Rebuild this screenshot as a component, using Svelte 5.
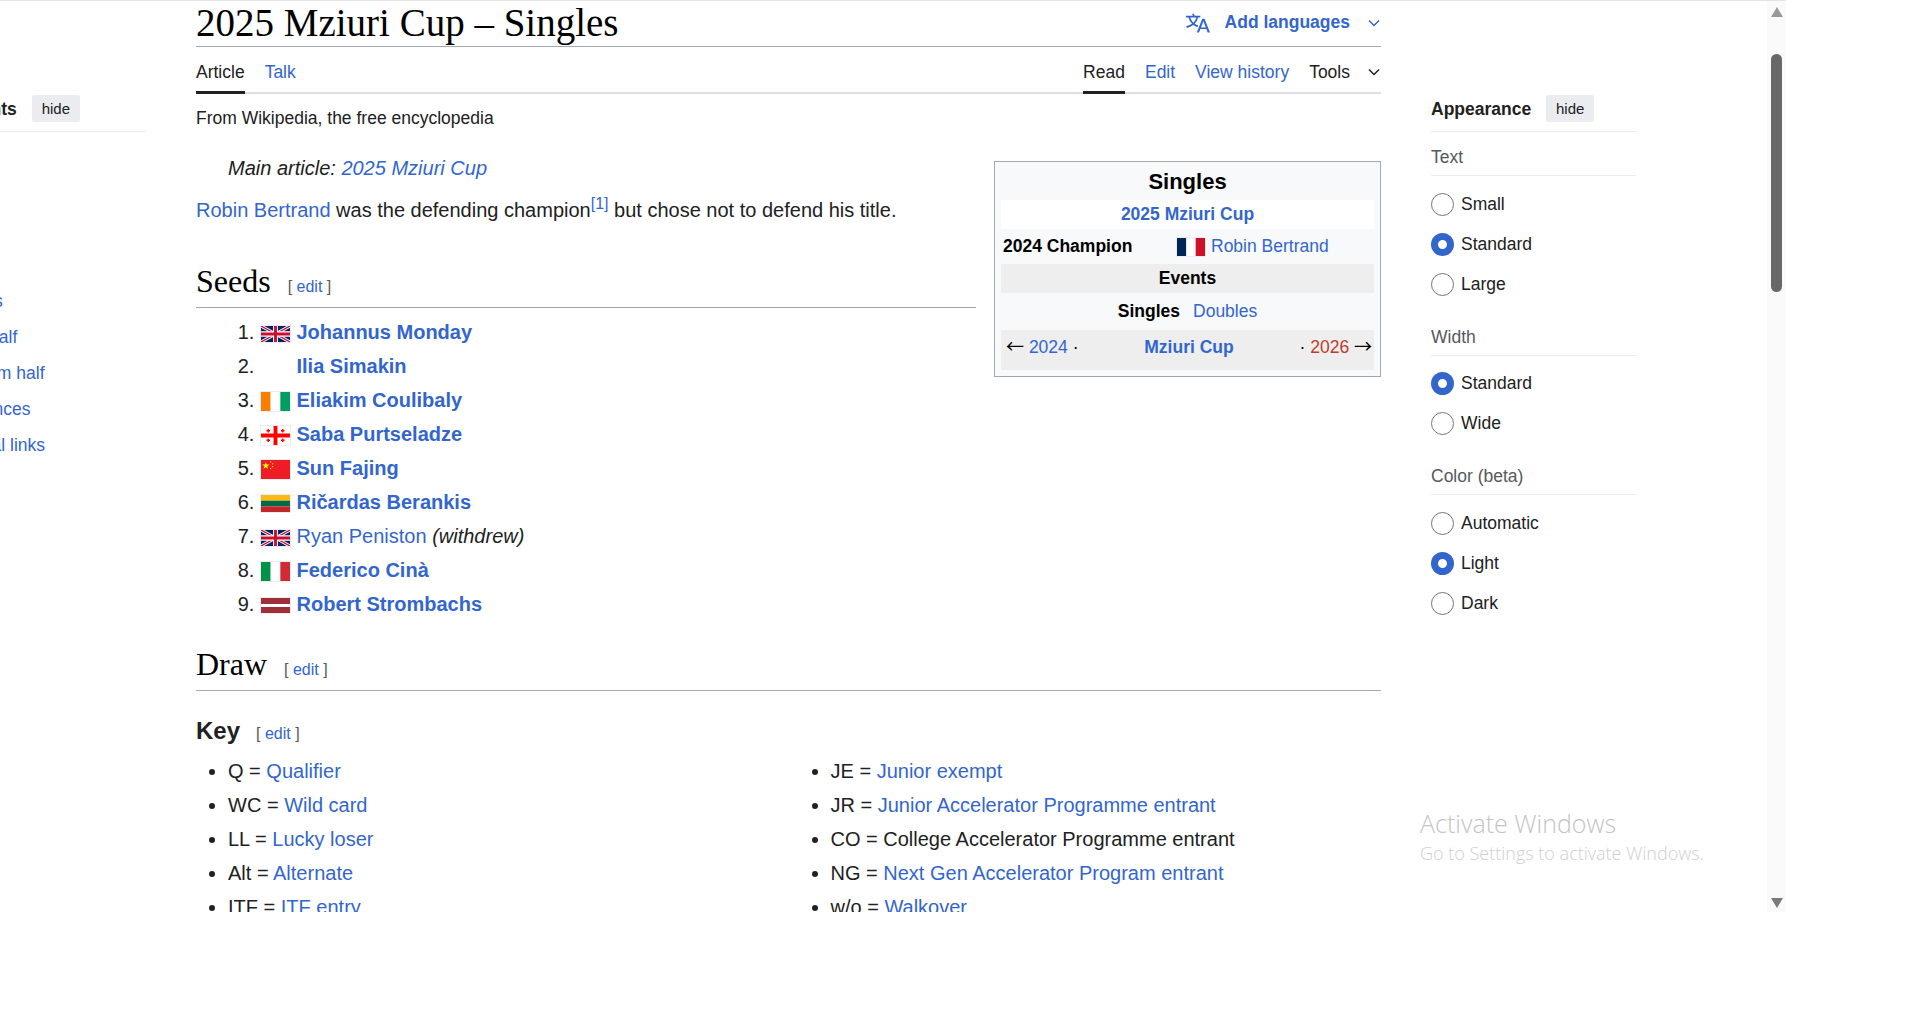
<script>
  const toc = [
    { title: "(Top)" },
    { title: "Seeds" },
    { title: "Draw" },
    { title: "Key", sub: true },
    { title: "Finals", sub: true },
    { title: "Top half", sub: true },
    { title: "Bottom half", sub: true },
    { title: "References" },
    { title: "External links" },
  ];

  const seeds = [
    { flag: "gb", name: "Johannus Monday", bold: true },
    { flag: "", name: "Ilia Simakin", bold: true },
    { flag: "ci", name: "Eliakim Coulibaly", bold: true },
    { flag: "ge", name: "Saba Purtseladze", bold: true },
    { flag: "cn", name: "Sun Fajing", bold: true },
    { flag: "lt", name: "Ričardas Berankis", bold: true },
    { flag: "gb", name: "Ryan Peniston", note: "(withdrew)" },
    { flag: "it", name: "Federico Cinà", bold: true },
    { flag: "lv", name: "Robert Strombachs", bold: true },
  ];

  const keyLeft = [
    ["Q", "Qualifier"],
    ["WC", "Wild card"],
    ["LL", "Lucky loser"],
    ["Alt", "Alternate"],
    ["ITF", "ITF entry"],
  ];

  const keyRight = [
    ["JE", "Junior exempt"],
    ["JR", "Junior Accelerator Programme entrant"],
    ["CO", "College Accelerator Programme entrant", true],
    ["NG", "Next Gen Accelerator Program entrant"],
    ["w/o", "Walkover"],
  ];

  const appearance = [
    { label: "Text", name: "text", options: ["Small", "Standard", "Large"], value: "Standard" },
    { label: "Width", name: "width", options: ["Standard", "Wide"], value: "Standard" },
    { label: "Color (beta)", name: "color", options: ["Automatic", "Light", "Dark"], value: "Light" },
  ];
</script>

{#snippet flag(code)}
  {#if code === "gb"}
    <svg class="flag" viewBox="0 0 60 30" width="31" height="18" preserveAspectRatio="none">
      <rect width="60" height="30" fill="#012169" />
      <path d="M0 0L60 30M60 0L0 30" stroke="#fff" stroke-width="6" />
      <path d="M0 0L60 30M60 0L0 30" stroke="#c8102e" stroke-width="2.5" />
      <path d="M30 0V30M0 15H60" stroke="#fff" stroke-width="10" />
      <path d="M30 0V30M0 15H60" stroke="#c8102e" stroke-width="6" />
    </svg>
  {:else if code === "ci"}
    <svg class="flag" viewBox="0 0 3 2" width="31" height="21" preserveAspectRatio="none">
      <rect width="1" height="2" fill="#f77f00" />
      <rect x="1" width="1" height="2" fill="#fff" />
      <rect x="2" width="1" height="2" fill="#009e60" />
    </svg>
  {:else if code === "ge"}
    <svg class="flag" viewBox="0 0 30 20" width="31" height="21" preserveAspectRatio="none">
      <rect width="30" height="20" fill="#fff" />
      <path d="M15 0V20M0 10H30" stroke="#f00" stroke-width="4" />
      <path d="M7.5 3.2V6.8M5.7 5H9.3M22.5 3.2V6.8M20.7 5H24.3M7.5 13.2V16.8M5.7 15H9.3M22.5 13.2V16.8M20.7 15H24.3" stroke="#f00" stroke-width="1.4" />
    </svg>
  {:else if code === "cn"}
    <svg class="flag" viewBox="0 0 30 20" width="31" height="21" preserveAspectRatio="none">
      <rect width="30" height="20" fill="#ee1c25" />
      <polygon points="5,2 5.9,4.8 8.8,4.8 6.5,6.5 7.4,9.2 5,7.6 2.6,9.2 3.5,6.5 1.2,4.8 4.1,4.8" fill="#ff0" />
      <circle cx="10" cy="2" r="0.7" fill="#ff0" />
      <circle cx="12" cy="4" r="0.7" fill="#ff0" />
      <circle cx="12" cy="7" r="0.7" fill="#ff0" />
      <circle cx="10" cy="9" r="0.7" fill="#ff0" />
    </svg>
  {:else if code === "lt"}
    <svg class="flag" viewBox="0 0 3 3" width="31" height="19" preserveAspectRatio="none">
      <rect width="3" height="1" fill="#fdb913" />
      <rect y="1" width="3" height="1" fill="#006a44" />
      <rect y="2" width="3" height="1" fill="#c1272d" />
    </svg>
  {:else if code === "it"}
    <svg class="flag" viewBox="0 0 3 2" width="31" height="21" preserveAspectRatio="none">
      <rect width="1" height="2" fill="#009246" />
      <rect x="1" width="1" height="2" fill="#fff" />
      <rect x="2" width="1" height="2" fill="#ce2b37" />
    </svg>
  {:else if code === "lv"}
    <svg class="flag" viewBox="0 0 30 15" width="31" height="17" preserveAspectRatio="none">
      <rect width="30" height="15" fill="#9e3039" />
      <rect y="6" width="30" height="3" fill="#fff" />
    </svg>
  {:else if code === "fr"}
    <svg class="flag" viewBox="0 0 3 2" width="30" height="20" preserveAspectRatio="none">
      <rect width="1" height="2" fill="#002654" />
      <rect x="1" width="1" height="2" fill="#fff" />
      <rect x="2" width="1" height="2" fill="#ce1126" />
    </svg>
  {/if}
{/snippet}

{#snippet chevron()}
  <svg class="chevron" viewBox="0 0 12 8" width="12" height="8">
    <path d="M1 1.5L6 6.5L11 1.5" fill="none" stroke="currentColor" stroke-width="1.5" />
  </svg>
{/snippet}

{#snippet edit()}
  <span class="editsection">[ <a href="#edit">edit</a> ]</span>
{/snippet}

<div class="page">
  <aside class="toc">
    <div class="panel-head">
      <strong>Contents</strong>
      <button>hide</button>
    </div>
    <ul>
      {#each toc as item}
        <li class:sub={item.sub}><a href="#toc">{item.title}</a></li>
      {/each}
    </ul>
  </aside>

  <main>
    <header class="title-row">
      <h1>2025 Mziuri Cup – Singles</h1>
      <a class="languages" href="#lang">
        <svg viewBox="0 0 20 20" width="24" height="24" fill="currentColor">
          <path d="M20 18h-1.44a.6.6 0 0 1-.4-.12.8.8 0 0 1-.23-.31L17 15h-5l-1 2.54a.8.8 0 0 1-.22.3.6.6 0 0 1-.4.14H9l4.55-11.47h1.89zm-3.53-4.31L14.89 9.5a12 12 0 0 1-.39-1.24q-.09.37-.19.69l-.19.56-1.58 4.19zm-6.3-1.58a13.4 13.4 0 0 1-2.91-1.41 11.46 11.46 0 0 0 2.81-5.37H12V4H7.31a4 4 0 0 0-.2-.56C6.87 2.79 6.6 2 6.6 2l-1.47.5s.4.89.6 1.5H0v1.33h2.15A11.23 11.23 0 0 0 5 10.7a17.2 17.2 0 0 1-5 2.1q.56.82.87 1.38a23.3 23.3 0 0 0 5.22-2.51 15.6 15.6 0 0 0 3.56 1.77zM3.63 5.33h4.91a8.1 8.1 0 0 1-2.45 4.45 9.1 9.1 0 0 1-2.46-4.45" />
        </svg>
        <b>Add languages</b>
        {@render chevron()}
      </a>
    </header>

    <nav class="tabs">
      <div class="tab-group">
        <span class="tab active">Article</span>
        <a class="tab" href="#talk">Talk</a>
      </div>
      <div class="tab-group">
        <span class="tab active">Read</span>
        <a class="tab" href="#edit">Edit</a>
        <a class="tab" href="#history">View history</a>
        <span class="tab tools">Tools {@render chevron()}</span>
      </div>
    </nav>

    <p class="tagline">From Wikipedia, the free encyclopedia</p>

    <div class="article">
      <table class="infobox">
        <tbody>
          <tr><th colspan="2" class="ib-title">Singles</th></tr>
          <tr><td colspan="2" class="ib-event"><a href="#cup">2025 Mziuri Cup</a></td></tr>
          <tr class="ib-champ">
            <th>2024 Champion</th>
            <td>{@render flag("fr")}<a href="#robin">Robin Bertrand</a></td>
          </tr>
          <tr><th colspan="2" class="ib-band">Events</th></tr>
          <tr>
            <td colspan="2" class="ib-events"><b>Singles</b><a href="#doubles">Doubles</a></td>
          </tr>
          <tr>
            <td colspan="2" class="ib-nav">
              <div class="ib-nav-row">
                <span><span class="nav-arrow">←</span> <a href="#2024">2024</a> ·</span>
                <a class="strong" href="#cup">Mziuri Cup</a>
                <span class="right">· <a class="new" href="#2026">2026</a> <span class="nav-arrow">→</span></span>
              </div>
            </td>
          </tr>
        </tbody>
      </table>

      <p class="hatnote">Main article: <a href="#cup">2025 Mziuri Cup</a></p>
      <p class="lead">
        <a href="#robin">Robin Bertrand</a> was the defending champion<sup><a href="#ref">[1]</a></sup> but chose not to defend his title.
      </p>

      <h2>Seeds{@render edit()}</h2>
      <ol class="seeds">
        {#each seeds as seed}
          <li>
            <span class="flag-slot">{@render flag(seed.flag)}</span>{#if seed.bold}<a class="strong" href="#player">{seed.name}</a>{:else}<a href="#player">{seed.name}</a> <i>{seed.note}</i>{/if}
          </li>
        {/each}
      </ol>

      <h2 class="draw">Draw{@render edit()}</h2>
      <h3>Key{@render edit()}</h3>
      <div class="key">
        <ul>
          {#each keyLeft as [abbr, text]}
            <li>{abbr} = <a href="#key">{text}</a></li>
          {/each}
        </ul>
        <ul>
          {#each keyRight as [abbr, text, plain]}
            <li>{abbr} = {#if plain}{text}{:else}<a href="#key">{text}</a>{/if}</li>
          {/each}
        </ul>
      </div>
    </div>
  </main>

  <aside class="appearance">
    <div class="panel-head">
      <strong>Appearance</strong>
      <button>hide</button>
    </div>
    {#each appearance as group}
      <section>
        <div class="group-label">{group.label}</div>
        {#each group.options as option}
          <label class="radio">
            <input type="radio" name={group.name} value={option} checked={option === group.value} />
            {option}
          </label>
        {/each}
      </section>
    {/each}
  </aside>

  <div class="scrollbar">
    <span class="arrow up"></span>
    <span class="thumb"></span>
    <span class="arrow down"></span>
  </div>
</div>

<div class="activate">
  <div class="activate-big">Activate Windows</div>
  <div class="activate-small">Go to Settings to activate Windows.</div>
</div>

<style>
  :global(body) {
    background: #fff;
    color: #202122;
    font-family: "Liberation Sans", Arial, sans-serif;
  }

  a {
    color: #36c;
    text-decoration: none;
  }

  a.new {
    color: #bf3c2c;
  }

  .page {
    display: flex;
    width: 1786px;
    height: 912px;
    overflow: hidden;
    border-top: 1px solid #e4e4e4;
    box-sizing: border-box;
    position: relative;
  }

  /* sidebars */
  .toc {
    flex: 0 0 205px;
    margin-left: -59px;
    margin-right: 50px;
    font-size: 17.5px;
  }

  .appearance {
    flex: 0 0 205px;
    margin-left: 50px;
    font-size: 17.5px;
  }

  .panel-head {
    display: flex;
    align-items: center;
    gap: 15px;
    height: 27px;
    margin-top: 94px;
    padding-bottom: 9px;
    border-bottom: 1px solid #eaecf0;
  }

  .panel-head strong {
    margin-top: 2px;
    font-size: 17.5px;
  }

  button {
    width: 48px;
    height: 27px;
    padding: 0;
    border: none;
    border-radius: 2px;
    background: #eaecf0;
    color: #202122;
    font: 15px "Liberation Sans", Arial, sans-serif;
  }

  .toc ul {
    list-style: none;
    margin: 7px 0 0;
    padding: 0;
  }

  .toc li {
    height: 36px;
    line-height: 36px;
    white-space: nowrap;
  }

  .toc li.sub {
    padding-left: 15px;
  }

  .group-label {
    height: 33px;
    line-height: 30px;
    padding-top: 10px;
    margin-bottom: 8px;
    color: #54595d;
    border-bottom: 1px solid #eaecf0;
  }

  .appearance section + section {
    margin-top: 7.5px;
  }

  .radio {
    display: flex;
    align-items: center;
    gap: 7px;
    height: 40px;
  }

  .radio input {
    appearance: none;
    box-sizing: border-box;
    width: 23px;
    height: 23px;
    margin: 0;
    border: 1px solid #72777d;
    border-radius: 50%;
    background: #fff;
  }

  .radio input:checked {
    border: 7px solid #36c;
  }

  /* main column */
  main {
    flex: 0 0 1185px;
  }

  .title-row {
    display: flex;
    justify-content: space-between;
    align-items: center;
    height: 45px;
    border-bottom: 1px solid #a2a9b1;
  }

  h1 {
    margin: 0 0 2px;
    font: 400 39px/43px "Liberation Serif", Georgia, serif;
    color: #000;
  }

  .languages {
    display: flex;
    align-items: center;
    margin: 0 1px 2px 0;
    font-size: 17.5px;
  }

  .languages b {
    margin: 0 18px 0 15px;
  }

  .tabs {
    display: flex;
    justify-content: space-between;
    height: 47px;
    box-sizing: border-box;
    border-bottom: 2px solid #dcdfe3;
    font-size: 17.5px;
  }

  .tab-group {
    display: flex;
    gap: 20px;
    margin-right: 1px;
  }

  .tab {
    height: 47px;
    box-sizing: border-box;
    line-height: 51px;
  }

  .tab.active {
    border-bottom: 3px solid #202122;
  }

  .tools {
    display: flex;
    align-items: center;
    gap: 18px;
    padding-top: 3px;
    line-height: 48px;
  }

  .tagline {
    margin: 12px 0 0;
    font-size: 17.5px;
    line-height: 24px;
  }

  .article {
    padding-top: 22px;
    font-size: 20px;
    line-height: 32px;
  }

  .hatnote {
    margin: 0 0 10px;
    padding-left: 32px;
    font-style: italic;
  }

  .lead {
    margin: 0;
  }

  sup {
    font-size: 16px;
    line-height: 1;
  }

  .infobox {
    float: right;
    box-sizing: border-box;
    width: 387px;
    margin: 9px 0 8px 18px;
    padding: 0 6px 6px;
    border: 1px solid #a2a9b1;
    border-spacing: 0;
    background: #f8f9fa;
    color: #000;
    font-size: 17.5px;
    line-height: 24px;
    text-align: center;
  }

  .infobox th,
  .infobox td {
    box-sizing: border-box;
    padding: 0 0 2px;
  }

  .infobox .ib-title {
    height: 38px;
    padding: 2px 0 0;
    font-size: 22px;
  }

  .ib-event {
    height: 29px;
    background: #fff;
    font-weight: bold;
  }

  .ib-champ {
    height: 35px;
    text-align: left;
  }

  .infobox .ib-champ th {
    width: 175px;
    padding-left: 2px;
    text-align: left;
  }

  .ib-champ td {
    text-align: left;
  }

  .ib-champ .flag {
    margin-right: 5px;
  }

  .ib-band {
    height: 29px;
    background: #eeeeee;
  }

  .ib-events {
    height: 37px;
  }

  .ib-events a {
    margin-left: 13px;
  }

  .infobox .ib-nav {
    height: 40px;
    padding-bottom: 6px;
    background: #eeeeee;
  }

  .ib-nav-row {
    display: grid;
    grid-template-columns: 1fr auto 1fr;
    padding: 0 2px 0 5px;
    text-align: left;
    align-items: center;
  }

  .ib-nav-row .right {
    text-align: right;
  }

  .nav-arrow {
    font-family: "Noto Sans CJK SC", sans-serif;
    font-size: 18px;
    line-height: 20px;
  }

  .strong {
    font-weight: bold;
  }

  h2 {
    overflow: hidden;
    height: 40px;
    margin: 35px 0 0;
    padding-bottom: 6px;
    border-bottom: 1px solid #a2a9b1;
    font: 400 32px/40px "Liberation Serif", Georgia, serif;
    color: #000;
  }

  h2.draw {
    margin-top: 23px;
  }

  h3 {
    height: 30px;
    margin: 25px 0 8px;
    font-size: 24px;
    line-height: 30px;
    color: #202122;
  }

  .editsection {
    margin-left: 17px;
    font: 400 16px "Liberation Sans", Arial, sans-serif;
    color: #54595d;
  }

  h3 .editsection {
    margin-left: 16px;
  }

  .seeds {
    margin: 7px 0 0;
    padding-left: 64px;
    line-height: 34px;
  }

  .flag-slot {
    display: inline-block;
    width: 31px;
    margin-right: 5.5px;
    vertical-align: middle;
    line-height: 0;
  }

  .flag {
    border: 1px solid #eaecf0;
    box-sizing: border-box;
    vertical-align: middle;
  }

  .key {
    display: grid;
    grid-template-columns: 1fr 1fr;
    column-gap: 20px;
  }

  .key ul {
    margin: 0;
    padding-left: 32px;
    line-height: 34px;
  }

  .chevron {
    display: block;
  }

  /* scrollbar */
  .scrollbar {
    position: absolute;
    left: 1767px;
    top: -1px;
    width: 19px;
    height: 912px;
    background: #fafafa;
    display: flex;
    flex-direction: column;
    align-items: center;
  }

  .arrow {
    width: 0;
    height: 0;
    border-left: 6px solid transparent;
    border-right: 6px solid transparent;
  }

  .arrow.up {
    margin-top: 7px;
    border-bottom: 10px solid #999;
  }

  .thumb {
    width: 11px;
    height: 238px;
    margin-top: 37px;
    border-radius: 6px;
    background: #686868;
  }

  .arrow.down {
    margin-top: auto;
    margin-bottom: 4px;
    border-top: 10px solid #7a7a7a;
  }

  /* watermark */
  .activate {
    position: absolute;
    left: 1420px;
    top: 806px;
    font-family: "Open Sans", sans-serif;
    font-weight: 300;
    pointer-events: none;
  }

  .activate-big {
    font-size: 25px;
    line-height: 34px;
    color: #c4c4c4;
  }

  .activate-small {
    font-size: 18px;
    line-height: 26px;
    color: #cfcfcf;
  }
</style>
